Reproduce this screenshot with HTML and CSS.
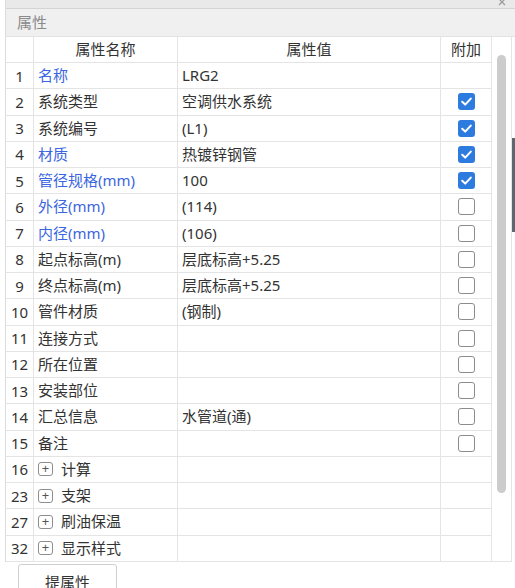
FILE: index.html
```html
<!DOCTYPE html>
<html lang="zh-CN">
<head>
<meta charset="utf-8">
<title>属性</title>
<link rel="stylesheet" href="styles.css">
</head>
<body>
<div class="window">
  <div class="titlebar">
    <svg class="close" width="8" height="8" viewBox="0 0 8 8"><path d="M1 1L7 7M7 1L1 7" stroke="#9a9a9a" stroke-width="1.2" fill="none"/></svg>
  </div>
  <div class="section">属性</div>
  <div class="grid-wrap">
    <div class="table">
      <div class="row head">
        <div class="c num"></div>
        <div class="c name center">属性名称</div>
        <div class="c val center">属性值</div>
        <div class="c add center">附加</div>
      </div>
      <div class="row"><div class="c num">1</div><div class="c name blue">名称</div><div class="c val">LRG2</div><div class="c add"></div></div>
      <div class="row"><div class="c num">2</div><div class="c name">系统类型</div><div class="c val">空调供水系统</div><div class="c add"><span class="cb on"><svg viewBox="0 0 17 17" width="17" height="17"><path d="M4.2 8.8L7.2 11.6L12.8 5.6" stroke="#fff" stroke-width="2" fill="none" stroke-linecap="round" stroke-linejoin="round"/></svg></span></div></div>
      <div class="row"><div class="c num">3</div><div class="c name">系统编号</div><div class="c val">(L1)</div><div class="c add"><span class="cb on"><svg viewBox="0 0 17 17" width="17" height="17"><path d="M4.2 8.8L7.2 11.6L12.8 5.6" stroke="#fff" stroke-width="2" fill="none" stroke-linecap="round" stroke-linejoin="round"/></svg></span></div></div>
      <div class="row"><div class="c num">4</div><div class="c name blue">材质</div><div class="c val">热镀锌钢管</div><div class="c add"><span class="cb on"><svg viewBox="0 0 17 17" width="17" height="17"><path d="M4.2 8.8L7.2 11.6L12.8 5.6" stroke="#fff" stroke-width="2" fill="none" stroke-linecap="round" stroke-linejoin="round"/></svg></span></div></div>
      <div class="row"><div class="c num">5</div><div class="c name blue">管径规格(mm)</div><div class="c val">100</div><div class="c add"><span class="cb on"><svg viewBox="0 0 17 17" width="17" height="17"><path d="M4.2 8.8L7.2 11.6L12.8 5.6" stroke="#fff" stroke-width="2" fill="none" stroke-linecap="round" stroke-linejoin="round"/></svg></span></div></div>
      <div class="row"><div class="c num">6</div><div class="c name blue">外径(mm)</div><div class="c val">(114)</div><div class="c add"><span class="cb"></span></div></div>
      <div class="row"><div class="c num">7</div><div class="c name blue">内径(mm)</div><div class="c val">(106)</div><div class="c add"><span class="cb"></span></div></div>
      <div class="row"><div class="c num">8</div><div class="c name">起点标高(m)</div><div class="c val">层底标高+5.25</div><div class="c add"><span class="cb"></span></div></div>
      <div class="row"><div class="c num">9</div><div class="c name">终点标高(m)</div><div class="c val">层底标高+5.25</div><div class="c add"><span class="cb"></span></div></div>
      <div class="row"><div class="c num">10</div><div class="c name">管件材质</div><div class="c val">(钢制)</div><div class="c add"><span class="cb"></span></div></div>
      <div class="row"><div class="c num">11</div><div class="c name">连接方式</div><div class="c val"></div><div class="c add"><span class="cb"></span></div></div>
      <div class="row"><div class="c num">12</div><div class="c name">所在位置</div><div class="c val"></div><div class="c add"><span class="cb"></span></div></div>
      <div class="row"><div class="c num">13</div><div class="c name">安装部位</div><div class="c val"></div><div class="c add"><span class="cb"></span></div></div>
      <div class="row"><div class="c num">14</div><div class="c name">汇总信息</div><div class="c val">水管道(通)</div><div class="c add"><span class="cb"></span></div></div>
      <div class="row"><div class="c num">15</div><div class="c name">备注</div><div class="c val"></div><div class="c add"><span class="cb"></span></div></div>
      <div class="row"><div class="c num">16</div><div class="c name"><span class="exp">+</span>计算</div><div class="c val"></div><div class="c add"></div></div>
      <div class="row"><div class="c num">23</div><div class="c name"><span class="exp">+</span>支架</div><div class="c val"></div><div class="c add"></div></div>
      <div class="row"><div class="c num">27</div><div class="c name"><span class="exp">+</span>刷油保温</div><div class="c val"></div><div class="c add"></div></div>
      <div class="row"><div class="c num">32</div><div class="c name"><span class="exp">+</span>显示样式</div><div class="c val"></div><div class="c add"></div></div>
    </div>
    <div class="scroll"><div class="thumb"></div></div>
  </div>
</div>
<div class="footer"><button class="btn">提属性</button></div>
<div class="edge"></div>
</body>
</html>
```

FILE: styles.css
```css
html, body {
  margin: 0;
  padding: 0;
  background: #ffffff;
}
body {
  width: 515px;
  height: 588px;
  overflow: hidden;
  position: relative;
  font-family: "Noto Sans", "Noto Sans CJK SC", sans-serif;
  font-size: 15px;
  color: #333333;
}
.window {
  margin-left: 5px;
  width: 507px;
  border-left: 1px solid #dcdcdc;
}
.titlebar {
  height: 8px;
  background: #e9e9e9;
  border-bottom: 1px solid #d4d4d4;
  display: flex;
  justify-content: flex-end;
  align-items: flex-start;
  overflow: hidden;
  width: 509px;
}
.close {
  margin-top: -2px;
  margin-right: 9px;
}
.section {
  height: 27px;
  width: 509px;
  background: #f0f0f0;
  border-bottom: 1px solid #e2e2e2;
  color: #8a8a8a;
  font-family: "Noto Sans CJK SC", sans-serif;
  font-size: 15px;
  line-height: 26px;
  padding-left: 11px;
  box-sizing: border-box;
  height: 28px;
}
.grid-wrap {
  display: flex;
  width: 506px;
}
.table {
  width: 486px;
}
.row {
  display: grid;
  grid-template-columns: 28px 144px 263px 51px;
  height: 26.26px;
  border-bottom: 1px solid #e4e4e4;
  box-sizing: border-box;
}
.row.head {
  height: 26px;
}
.c {
  border-right: 1px solid #e4e4e4;
  display: flex;
  align-items: center;
  white-space: nowrap;
  overflow: hidden;
  line-height: 1;
}
.num {
  justify-content: center;
  padding-top: 1px;
}
.name {
  padding-left: 4px;
}
.val {
  padding-left: 4px;
}
.center {
  justify-content: center;
  padding-left: 0;
}
.add {
  justify-content: center;
}
.blue {
  color: #3a66e0;
}
.cb {
  width: 17px;
  height: 17px;
  box-sizing: border-box;
  border: 1.5px solid #8c8c8c;
  border-radius: 3px;
  background: #ffffff;
  display: block;
  margin-left: 1px;
}
.cb.on {
  border: none;
  background: #2e7be0;
}
.cb svg {
  display: block;
}
.exp {
  width: 15px;
  height: 14px;
  box-sizing: border-box;
  border: 1px solid #8e8e8e;
  border-radius: 3px;
  display: inline-flex;
  align-items: center;
  justify-content: center;
  font-size: 13px;
  line-height: 1;
  color: #555;
  margin-left: 0;
  margin-right: 8px;
  padding-bottom: 1px;
}
.scroll {
  width: 20px;
  border-right: 1px solid #e4e4e4;
  border-bottom: 1px solid #e4e4e4;
  position: relative;
}
.thumb {
  position: absolute;
  left: 5px;
  top: 18px;
  width: 9px;
  height: 438px;
  border-radius: 5px;
  background: #cccccc;
}
.footer {
  padding-top: 2px;
  padding-left: 18px;
}
.btn {
  width: 99px;
  height: 32px;
  background: #ffffff;
  border: 1px solid #cfcfcf;
  border-radius: 3px;
  font-family: "Noto Sans CJK SC", sans-serif;
  font-size: 15px;
  color: #333;
  padding: 4px 0 0;
  display: block;
  box-sizing: border-box;
  line-height: 1;
  text-align: center;
}
.edge {
  position: absolute;
  left: 512px;
  top: 138px;
  width: 3px;
  height: 94px;
  background: #5d6772;
}
```
